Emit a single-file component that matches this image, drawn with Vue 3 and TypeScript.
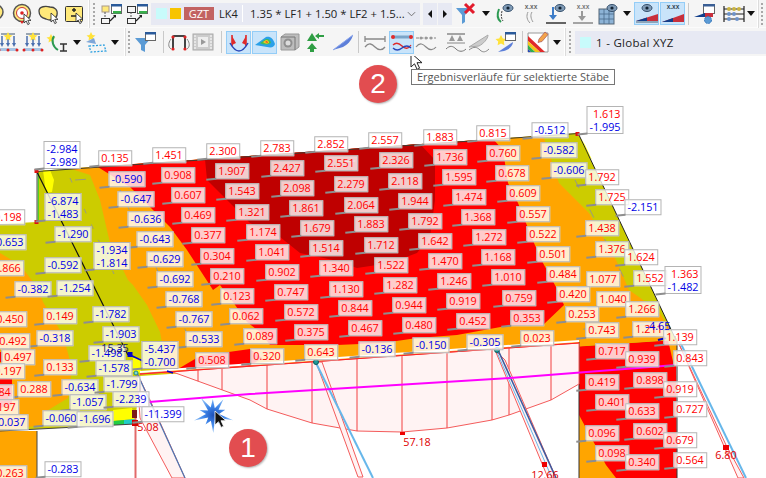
<script setup lang="ts">
type Cell = { k: 'i' | 'a' | 'c' | 's' | 'b' | 'g' | 'x'; w: number; svg?: string }

const cur = (x: number, y: number) =>
  `<path transform="translate(${x} ${y})" d="M0 0v9l2.2-2 1.6 3.6 1.6-.8L3.8 6.4H7z" fill="#fff" stroke="#222" stroke-width=".8"/>`

const mag = `<circle cx="12" cy="10" r="7" fill="#ffe97a" stroke="#555" stroke-width="1.5"/>`
const target = `<circle cx="12" cy="11" r="8.5" fill="#ffe97a" stroke="#555" stroke-width="1.5"/><circle cx="12" cy="11" r="5.5" fill="#fff" stroke="#c33"/><circle cx="12" cy="11" r="1.8" fill="#d22"/><path d="M10 19h4l-2 3z" fill="#d22"/>${cur(14, 12)}`
const cloud = `<path d="M3 9C3 4 10 4 14 5c5 0 8 3 7 8-1 5-7 6-11 4-4-1-7-3-7-8z" fill="#ffe97a" stroke="#444" stroke-width="1.3"/>${cur(15, 11)}`
const ybox = `<rect x="3.500" y="4.500" width="17" height="15" rx="1" fill="#ffe97a" stroke="#333"/><path d="M10 8h4M12 6v4M9 14h5" stroke="#222" stroke-width="1.4"/>${cur(14, 11)}`
const winTail = `<rect x="12.500" y="2.500" width="10" height="9" fill="#fff" stroke="#666"/><rect x="12" y="2" width="11" height="2.500" fill="#2a5a9a"/><rect x="14" y="9" width="8" height="2.500" fill="#36b04a"/><rect x="2.500" y="16.500" width="8" height="5" fill="none" stroke="#333"/><path d="M11 19l5-5" stroke="#222" stroke-width="1.2"/><path d="M14 13l3 0 0 3z" fill="#222"/>`
const winA = `<rect x="3" y="4" width="7" height="6" fill="#ffe97a" stroke="#a98"/><path d="M6 10v6" stroke="#555" stroke-dasharray="2 1"/>${winTail}`
const winB = `<rect x="2.500" y="4.500" width="8" height="6" fill="none" stroke="#333"/><path d="M6 10v6" stroke="#555" stroke-dasharray="2 1"/>${winTail}`
const funnelX = `<path d="M2 6h15l-6 7v7l-3 2v-9z" fill="#5b9bd5"/><path d="M11 2l9 9M20 2l-9 9" stroke="#e21b2c" stroke-width="3"/>`
const eye = (x: number, y: number) =>
  `<ellipse cx="${x}" cy="${y}" rx="5" ry="3.500" fill="#7f9ab5" stroke="#35506d"/><circle cx="${x}" cy="${y}" r="1.600" fill="#123"/>`
const arcEye = `<path d="M6 7c-2 5-2 10 2 13" fill="none" stroke="#2c9a52" stroke-width="2"/><path d="M9 9c-1 4-1 7 1 10" fill="none" stroke="#444" stroke-dasharray="2 1"/>${eye(15, 6)}`
const xxx = (c: string) => `<text x="12" y="7" font-size="6.500" font-family="Liberation Sans" font-weight="700" text-anchor="middle" fill="${c}">x.xx</text>`
const xxArc = `${xxx('#666')}<path d="M9 10c-2 4-1 8 2 11M13 10c-2 3-1 7 1 10" fill="none" stroke="#999"/>`
const eyeArrow = `${eye(16, 6)}<path d="M9 5v11" stroke="#3c7cc8" stroke-width="2"/><path d="M5 13h8l-4 5z" fill="#3c7cc8"/><path d="M2 21h20" stroke="#333" stroke-width="1.500"/>`
const xxArrow = `${xxx('#777')}<path d="M11 9v8" stroke="#999" stroke-width="2"/><path d="M7 14h8l-4 5z" fill="#999"/><path d="M2 21h20" stroke="#888" stroke-width="1.500"/>`
const gridEye = `<rect x="3" y="7" width="15" height="15" fill="#8db3d6" stroke="#567"/><path d="M8 7v15M13 7v15M3 12h15M3 17h15" stroke="#4a6a8a" stroke-width=".8"/>${eye(16, 6)}`
const wedgeEye = `${eye(12, 6)}<path d="M1 19l22-7v7z" fill="#c8303c"/><path d="M1 19l11-3.500v3.500z" fill="#123f8c"/><path d="M1 20h22" stroke="#345" stroke-width=".8"/>`
const wedgeX = `${xxx('#345')}<path d="M1 20l22-8v8z" fill="#c8303c"/><path d="M1 20l11-4v4z" fill="#123f8c"/>`
const winGear = `<rect x="10.500" y="2.500" width="11" height="9" fill="#fff" stroke="#666"/><rect x="10" y="2" width="12" height="2.500" fill="#3a5f95"/><path d="M1 15l11-4v4z" fill="#123f8c"/><path d="M12 11l8 0v4h-8z" fill="#c8303c"/><circle cx="15" cy="18" r="3.500" fill="#5b9bd5" stroke="#3a79bb" stroke-dasharray="2 1"/>`
const abacus = `<path d="M3 4v16M23 4v16M3 7h20M3 12h20M3 17h20" stroke="#222" stroke-width="1.200"/><circle cx="8" cy="7" r="2" fill="#c9b340"/><circle cx="13" cy="7" r="2" fill="#c9b340"/><circle cx="18" cy="7" r="2" fill="#c9b340"/><circle cx="8" cy="12" r="2" fill="#6d93c9"/><circle cx="13" cy="12" r="2" fill="#6d93c9"/><circle cx="8" cy="17" r="2" fill="#6d93c9"/><circle cx="16" cy="17" r="2" fill="#6d93c9"/>`

const load = `<path d="M5 4h14" stroke="#7b8b9b" stroke-width="1.500"/><path d="M6 6v9M12 6v9M18 6v9" stroke="#4a6fae" stroke-width="1.500"/><path d="M4 13h4l-2 4zM10 13h4l-2 4zM16 13h4l-2 4z" fill="#4a6fae"/><path d="M12 2l1.500 3 3 .5-2.500 2 .5 3-2.500-1.500-2.500 1.500.5-3-2.500-2 3-.5z" fill="#ffe23a"/><rect x="3" y="18" width="18" height="3" fill="#a9c5e4"/><circle cx="3" cy="20" r="1.500" fill="#d22"/><circle cx="21" cy="20" r="1.500" fill="#d22"/><circle cx="12" cy="20" r="1.500" fill="#d22"/>`
const starArc = `<path d="M5 4l1.500 3 3 .5-2.500 2 .5 3L5 11l-2.500 1.500.5-3-2.500-2 3-.5z" fill="#ffe23a"/><path d="M8 6c-3 5-1 11 4 14" fill="none" stroke="#2c9a52" stroke-width="2"/><path d="M14 14h7M17.500 14v7M14 21h7" stroke="#333" stroke-width="1.500"/>`
const starPlate = `<path d="M8 2l1.500 3 3 .5-2.500 2 .5 3L8 9l-2.500 1.500.5-3-2.500-2 3-.5z" fill="#ffe23a"/><path d="M3 12l8-4 2 6z" fill="#7fa6d8"/><path d="M6 16l15-1 2 6-15 1z" fill="none" stroke="#2a9fe0" stroke-dasharray="2 1.500" stroke-width="1.300"/>`
const funnelW = `<path d="M2 8h16l-6 7v7l-4-2v-5z" fill="#5b9bd5"/><rect x="12.500" y="2.500" width="10" height="8" fill="#fff" stroke="#666"/><rect x="12" y="2" width="11" height="2.500" fill="#2a5a9a"/>`
const frame = `<path d="M6 19V7q0-1 1-1h10q1 0 1 1v12" fill="none" stroke="#444" stroke-width="2"/><path d="M4 9c-3 4-3 8 0 10M20 9c3 4 3 8 0 10" fill="none" stroke="#888"/><circle cx="6" cy="7" r="1.600" fill="#d22"/><circle cx="18" cy="7" r="1.600" fill="#d22"/><circle cx="6" cy="19" r="1.600" fill="#d22"/><circle cx="18" cy="19" r="1.600" fill="#d22"/>`
const film = `<rect x="2" y="4" width="20" height="16" fill="#ccc" stroke="#aaa"/><rect x="7" y="7" width="10" height="10" fill="#eee"/><path d="M10 9v6l5-3z" fill="#999"/><path d="M3 6h2M3 9h2M3 12h2M3 15h2M3 18h2M19 6h2M19 9h2M19 12h2M19 15h2M19 18h2" stroke="#fff"/>`
const diagram = `<path d="M5 5v11M19 5v11" stroke="#e02a2a" stroke-width="1.600"/><path d="M5 6l4 7-4 2zM19 6l-4 7 4 2z" fill="#e02a2a"/><path d="M3 13q9 16 18 0" fill="none" stroke="#2747b8" stroke-width="1.500"/>`
const surface = `<path d="M2 15L13 7c4-1 7 1 9 7-1 3-3 4-8 3z" fill="#2aa0e8"/><path d="M7 13l6-4c3-.5 4 1 5 4-4 2-7 2-11 0z" fill="#3ebc5a"/><path d="M10 12l3-2c2 0 3 1 3 3-2 1-4 1-6-1z" fill="#f2c81e"/><path d="M12 12l2-1 1 2z" fill="#e23a2a"/>`
const box3d = `<path d="M3 7l4-3h14v13l-4 3H3z" fill="#bdbdbd" stroke="#999"/><path d="M3 7h14v13" fill="none" stroke="#777"/><circle cx="10" cy="13" r="4.500" fill="#8f8f8f"/><circle cx="10" cy="13" r="2.500" fill="#dcdcdc"/>`
const arrows = `<path d="M11 3l5 8H6z" fill="#2f9e44"/><path d="M11 13l5 6h-3v3H9v-3H6z" fill="#2f9e44"/><path d="M23 5h-5v-2l-4 3 4 3V7h5z" fill="#2f9e44"/>`
const slash = `<path d="M2 20L22 5c-1 5-6 10-10 12z" fill="#5d7fd9"/><path d="M2 20L22 5" stroke="#8aa5ec"/>`
const lines = (c: string, e: string) => `<path d="M2 9h20M2 6v6M22 6v6" stroke="${c}" stroke-width="1.300"/><path d="M2 17c4-5 7-3 10 0s7 4 10 0" fill="none" stroke="${e}" stroke-width="1.300"/>`
const linesSel = `<path d="M3 7h18" stroke="#7aa4c8" stroke-width="3"/><circle cx="3" cy="7" r="2" fill="#e02a2a"/><circle cx="21" cy="7" r="2" fill="#e02a2a"/><path d="M3 15q4-4 9 1t9-1" fill="none" stroke="#e02a2a" stroke-width="1.300"/><path d="M3 18q4 4 9 0t9 0" fill="none" stroke="#2747b8" stroke-width="1.300"/>`
const dash = `<path d="M2 8h20" stroke="#aaa" stroke-width="1.500" stroke-dasharray="3 1.500"/><circle cx="7" cy="8" r="1.500" fill="#999"/><circle cx="12" cy="8" r="1.500" fill="#999"/><circle cx="17" cy="8" r="1.500" fill="#999"/><path d="M2 17c4-5 7-3 10 0s7 4 10 0" fill="none" stroke="#888" stroke-width="1.200"/>`
const persons = `<path d="M3 4h18" stroke="#888" stroke-width="1.500"/><path d="M8 5l3 6H5zM16 5l3 6h-6z" fill="#999"/><path d="M3 13h18" stroke="#888"/><path d="M2 19c4-4 7-3 10 0s7 3 10 0" fill="none" stroke="#777"/>`
const fade = `<path d="M2 17L21 5c0 4-5 9-9 11z" fill="#ccc" stroke="#aaa"/><path d="M2 20c5-4 8-3 11 0s6 2 9-1" fill="none" stroke="#888"/>`
const starWin = `<path d="M8 5l1.800 3.500 3.700.6-2.700 2.500.6 3.700L8 13.500l-3.400 1.800.6-3.700L2.500 9.100l3.700-.6z" fill="#ffe23a"/><rect x="12.500" y="2.500" width="10" height="8" fill="#fff" stroke="#666"/><rect x="12" y="2" width="11" height="2.500" fill="#2a5a9a"/><path d="M5 22l15-10c0 4-5 8-9 9z" fill="#5d7fd9"/>`
const palette = `<path d="M2 3h20v19H2z" fill="#fff" stroke="#999"/><path d="M2 6L19 22h-5L2 11z" fill="#e02a2a"/><path d="M2 11l12 11H9L2 15z" fill="#f5c518"/><path d="M2 15l7 7H5l-3-3z" fill="#2fae4a"/><path d="M2 19l3 3H2z" fill="#2747b8"/><path d="M13 9l6-7 3 2.500-6 7-4 1z" fill="#f3a44a" stroke="#945" stroke-width=".6"/>`

const icon = (svg: string, w = 26): Cell => ({ k: 'i', w, svg })
const active = (svg: string, w = 25): Cell => ({ k: 'a', w, svg })
const caret = (w = 13): Cell => ({ k: 'c', w })
const sep = (w = 3): Cell => ({ k: 's', w })
const brk = (w = 3): Cell => ({ k: 'b', w })
const grip = (w = 8): Cell => ({ k: 'g', w })
const gap = (w: number): Cell => ({ k: 'x', w })

const leftA: Cell[] = [icon(mag), icon(target), icon(cloud), icon(ybox), brk(), grip(), icon(winA), icon(winB)]
const rightA: Cell[] = [
  icon(funnelX), caret(), icon(arcEye), icon(xxArc, 25), icon(eyeArrow), icon(xxArrow, 27), icon(gridEye, 24), caret(14),
  active(wedgeEye), gap(1), active(wedgeX), sep(7), icon(winGear), gap(2), icon(abacus), caret(10), brk(), grip(6),
]
const leftB: Cell[] = [
  icon(load), icon(load, 24), icon(starArc), caret(12), icon(starPlate, 24), caret(15), brk(4), grip(6), icon(funnelW), sep(10),
  icon(frame, 22), icon(film), sep(10), active(diagram), gap(1), active(surface), icon(box3d), icon(arrows, 20), gap(6), icon(slash, 28), sep(3),
  icon(lines('#888', '#888'), 29), active(linesSel), icon(dash, 24), gap(6), icon(persons, 24), icon(fade, 21), icon(starWin, 32), sep(2),
  icon(palette, 29), caret(10), brk(5), grip(5), gap(3),
]

type Label = [string, number, number]
const labels: Label[] = [
  ['0.135', 115, 158], ['1.451', 169, 155], ['2.300', 223, 151], ['2.783', 277, 148], ['2.852', 331, 144], ['2.557', 385, 140], ['1.883', 440, 137], ['0.815', 493, 133], ['-0.512', 550, 130],
  ['-0.590', 127, 179], ['0.908', 178, 175], ['1.907', 232, 171], ['2.427', 287, 168], ['2.551', 341, 163], ['2.326', 396, 160], ['1.736', 450, 157], ['0.760', 503, 153], ['-0.582', 559, 150],
  ['-0.647', 136, 199], ['0.607', 188, 195], ['1.543', 242, 191], ['2.098', 297, 188], ['2.279', 351, 184], ['2.118', 405, 181], ['1.595', 459, 177], ['0.678', 512, 173], ['-0.606', 569, 170], ['1.792', 602, 177],
  ['-0.636', 146, 219], ['0.469', 198, 215], ['1.321', 252, 212], ['1.861', 306, 208], ['2.064', 361, 205], ['1.944', 415, 201], ['1.474', 469, 197], ['0.609', 523, 193], ['1.725', 612, 197], ['-2.151', 643, 207],
  ['-0.643', 155, 239], ['0.377', 208, 235], ['1.174', 263, 232], ['1.679', 317, 228], ['1.883', 371, 224], ['1.792', 425, 221], ['1.368', 478, 217], ['0.557', 533, 214], ['1.438', 602, 228],
  ['-0.629', 165, 259], ['0.304', 217, 256], ['1.041', 272, 252], ['1.514', 326, 248], ['1.712', 381, 245], ['1.642', 435, 241], ['1.272', 489, 237], ['0.522', 543, 234], ['1.376', 612, 249], ['1.624', 641, 257],
  ['-0.692', 175, 279], ['0.210', 227, 276], ['0.902', 282, 272], ['1.340', 336, 268], ['1.522', 391, 265], ['1.470', 445, 261], ['1.168', 498, 257], ['0.501', 553, 254], ['1.552', 650, 278],
  ['-0.768', 184, 299], ['0.123', 237, 296], ['0.747', 291, 292], ['1.130', 346, 289], ['1.282', 400, 285], ['1.246', 454, 281], ['1.010', 508, 277], ['0.484', 563, 274], ['1.077', 603, 279],
  ['-0.767', 194, 319], ['0.062', 246, 316], ['0.572', 301, 312], ['0.844', 355, 308], ['0.944', 409, 305], ['0.919', 463, 301], ['0.759', 519, 298], ['0.420', 573, 294], ['1.040', 613, 299],
  ['-0.533', 204, 339], ['0.089', 260, 336], ['0.375', 311, 332], ['0.467', 365, 328], ['0.480', 419, 325], ['0.452', 473, 321], ['0.353', 527, 318], ['0.253', 582, 314], ['1.266', 642, 309],
  ['0.508', 212, 360], ['0.320', 267, 356], ['0.643', 321, 352], ['-0.136', 377, 349], ['-0.150', 431, 345], ['-0.305', 485, 342], ['0.023', 537, 338], ['0.743', 602, 330], ['1.211', 649, 329],
  ['0.717', 612, 351], ['0.939', 642, 359], ['0.419', 602, 382], ['0.898', 650, 380], ['0.401', 612, 402], ['0.633', 642, 411], ['0.096', 602, 433], ['0.602', 650, 431], ['0.098', 612, 453], ['0.340', 642, 462],
  ['0.843', 690, 358], ['0.919', 680, 389], ['0.727', 690, 409], ['0.679', 680, 440], ['0.564', 690, 460], ['1.139', 680, 337],
  ['0.198', 8, 217], ['-0.653', 8, 242], ['0.866', 7, 268], ['-1.290', 73, 234], ['-0.592', 63, 265], ['-0.382', 33, 289], ['-1.254', 75, 288], ['-1.782', 111, 314], ['0.149', 60, 316], ['0.450', 10, 319],
  ['-0.318', 55, 338], ['-1.903', 121, 334], ['0.492', 13, 341], ['0.497', 18, 357], ['-1.498', 107, 353], ['-1.578', 114, 368], ['0.133', 60, 367], ['0.197', 8, 371], ['0.288', 34, 389], ['-0.634', 80, 387],
  ['-1.799', 122, 384], ['-1.057', 88, 402], ['0.084', -3, 392], ['0.197', 2, 407], ['-0.060', 61, 418], ['-0.037', 10, 422], ['-1.696', 95, 419], ['-2.239', 131, 399], ['-11.399', 163, 414], ['-0.283', 63, 469], ['0.263', 10, 473],
  ['-2.984|-2.989', 62, 155], ['-6.874|-1.483', 63, 207], ['-1.934|-1.814', 112, 256], ['-5.437|-0.700', 160, 355], ['1.613|-1.995', 605, 120], ['1.363|-1.482', 683, 280],
]
const plainLabels: { t: string; x: number; y: number; c: string }[] = [
  { t: '15.35', x: 115, y: 347, c: 'dark' }, { t: '-4.65', x: 658, y: 325, c: 'blue' }, { t: '5.08', x: 148, y: 426, c: 'red' },
  { t: '57.18', x: 417, y: 441, c: 'red' }, { t: '12.66', x: 545, y: 474, c: 'red' }, { t: '6.80', x: 726, y: 454, c: 'red' },
]
const lineClass = (s: string) => (s.startsWith('-') ? 'neg' : 'pos')
const labelStyle = (x: number, y: number) => ({ left: `${x}px`, top: `${y - 56}px` })

const pts = (a: number[][]) => a.map((p) => p.join(',')).join(' ')
const olive = pts([[37, 171], [578, 133], [676, 340], [140, 376], [135, 424], [0, 431], [0, 224], [37, 222]])
const orangeL = pts([[0, 253], [20, 265], [37, 287], [43, 302], [63, 335], [72, 368], [68, 398], [45, 412], [43, 425], [0, 431]])
const orangeM = pts([[70, 168.500], [543, 135.500], [559, 183], [589, 213], [616, 260], [629, 290], [639, 297], [659, 312], [669, 328], [672, 340], [163, 374], [163, 348], [160, 332], [147, 305], [133, 285], [128, 280], [110, 243], [100, 200], [90, 175]])
const red = pts([[97, 166.500], [493, 139], [503, 150], [508, 183], [518, 203], [526, 223], [534, 243], [543, 263], [556, 287], [564, 305], [543, 325], [506, 326], [457, 335], [417, 338], [383, 343], [337, 345], [270, 345], [260, 332], [247, 322], [233, 302], [220, 285], [213, 290], [200, 270], [187, 250], [170, 227], [150, 207], [130, 187]])
const dark = pts([[205, 159], [420, 144], [435, 160], [435, 200], [430, 237], [417, 253], [390, 263], [357, 268], [333, 260], [300, 253], [280, 237], [250, 223], [227, 200], [207, 180]])
const pink = pts([[140, 374], [579, 343], [579, 384], [551, 400], [509, 415], [492, 420], [447, 428], [402, 432], [357, 431], [312, 423], [267, 409], [250, 400], [170, 371]])
const webV = [198, 222, 267, 312, 357, 402, 447, 492, 509, 551]
const webEnd = (x: number) => {
  const table: [number, number][] = [[170, 371], [250, 400], [267, 409], [312, 423], [357, 431], [402, 432], [447, 428], [492, 420], [509, 415], [551, 400], [579, 384]]
  for (let i = 1; i < table.length; i++) {
    if (x <= table[i][0]) {
      const [a, b] = table[i - 1]
      const [c, d] = table[i]
      return b + ((x - a) / (c - a)) * (d - b)
    }
  }
  return 384
}
const webTop = (x: number) => 374 - ((x - 140) * 31) / 439
const star = (() => {
  const radii = [21, 7, 15, 6, 19, 7, 13, 6, 20, 7, 14, 6, 21, 7, 15, 6, 18, 7, 13, 6]
  return radii
    .map((r, i) => {
      const a = (i / radii.length) * Math.PI * 2 + 0.3
      return `${(213 + r * Math.cos(a)).toFixed(1)},${(414 + r * Math.sin(a)).toFixed(1)}`
    })
    .join(' ')
})()
</script>

<template>
  <div class="page">
    <header class="toolbar">
      <div class="row row-a">
        <template v-for="(c, i) in leftA" :key="'la' + i">
          <div class="cell" :class="'k-' + c.k" :style="{ width: c.w + 'px' }">
            <svg v-if="c.svg" class="ic" viewBox="0 0 24 24" v-html="c.svg" />
          </div>
        </template>
        <div class="combo">
          <span class="swatch cyan"></span>
          <span class="swatch amber"></span>
          <span class="gzt">GZT</span>
          <span class="lk">LK4</span>
          <span class="combo-sep"></span>
          <span class="formula">1.35 * LF1 + 1.50 * LF2 + 1.5...</span>
          <svg class="chev" viewBox="0 0 10 6"><path d="M1 1l4 4 4-4" fill="none" stroke="#666" /></svg>
        </div>
        <button class="step" type="button"><svg viewBox="0 0 6 10"><path d="M5 1v8L1 5z" fill="#111" /></svg></button>
        <button class="step" type="button"><svg viewBox="0 0 6 10"><path d="M1 1v8l4-4z" fill="#111" /></svg></button>
        <template v-for="(c, i) in rightA" :key="'ra' + i">
          <div class="cell" :class="'k-' + c.k" :style="{ width: c.w + 'px' }">
            <svg v-if="c.svg" class="ic" viewBox="0 0 24 24" v-html="c.svg" />
          </div>
        </template>
      </div>
      <div class="row row-b">
        <template v-for="(c, i) in leftB" :key="'lb' + i">
          <div class="cell" :class="'k-' + c.k" :style="{ width: c.w + 'px' }">
            <svg v-if="c.svg" class="ic" viewBox="0 0 24 24" v-html="c.svg" />
          </div>
        </template>
        <div class="view">
          <span class="swatch cyan"></span>
          <span class="view-name">1 - Global XYZ</span>
        </div>
      </div>
    </header>

    <main class="canvas">
      <svg class="model" viewBox="0 56 766 422">
        <polygon :points="pts([[0, 431], [37, 431], [37, 478], [0, 478]])" fill="#ffa500" />
        <polygon :points="pts([[579, 340], [676, 336], [677, 478], [579, 478]])" fill="#ff0000" />
        <polygon :points="pts([[579, 415], [606, 465], [616, 478], [579, 478]])" fill="#ffa500" />
        <polygon :points="pts([[668, 340], [677, 338], [677, 366], [674, 366]])" fill="#ffa500" />
        <polygon :points="olive" fill="#cccc00" />
        <polygon :points="orangeL" fill="#ffa500" />
        <polygon :points="orangeM" fill="#ffa500" />
        <polygon :points="pts([[0, 378], [12, 378], [12, 405], [0, 408]])" fill="#ff0000" />
        <polygon :points="pts([[0, 352], [3, 352], [3, 362], [0, 362]])" fill="#ff0000" />
        <polygon :points="red" fill="#ff0000" />
        <polygon :points="pts([[178, 369], [200, 356], [250, 349], [262, 358], [250, 366]])" fill="#ff0000" />
        <polygon :points="dark" fill="#bf0000" />
        <polygon :points="pts([[43, 170], [50, 170], [54, 180], [52, 192], [46, 193]])" fill="#ffff00" />
        <polygon :points="pts([[580, 137], [585, 145], [592, 160], [588, 155]])" fill="#ffff00" />
        <polygon :points="pts([[133, 358], [140, 358], [141, 373], [133, 372]])" fill="#ffff00" />
        <polygon :points="pts([[113, 410], [132, 408], [135, 419], [113, 421]])" fill="#ffff00" />
        <polygon :points="pts([[113, 421], [124, 420], [124, 425], [113, 425]])" fill="#22cc44" />
        <polygon :points="pts([[124, 420], [135, 419], [135, 424], [124, 425]])" fill="#22ccc8" />
        <polygon :points="pts([[37, 172], [39, 172], [39, 222], [37, 222]])" fill="#55cc22" />

        <g fill="none" stroke="#9a9a80" stroke-width="1" stroke-dasharray="11 43">
          <path d="M75 180L560 147" />
          <path d="M260 353L680 322" />
          <path d="M70 178l44 96M120 190l70 150" stroke-dasharray="5 12" />
          <path d="M575 180l55 110" stroke-dasharray="9 24" />
        </g>

        <path d="M37 171.500L578 133.500" stroke="#3c3c30" stroke-width="1" />
        <path d="M37 172V222" stroke="#888" stroke-width="1.500" />
        <path d="M579 135L676 340" stroke="#222" stroke-width="1" />
        <path d="M37 172L128 355" stroke="#111" stroke-width="1.200" />
        <polygon :points="pts([[37, 431], [135, 424], [135, 478], [37, 478]])" fill="#fff" />
        <path d="M37 431V478M0 431L135 424" stroke="#444" stroke-width="1" fill="none" />
        <path d="M579 342V478M677 340V478" stroke="#333" stroke-width="1" fill="none" />

        <polygon :points="pink" fill="#fff3f3" stroke="#f45b5b" stroke-width="1" />
        <path d="M140 372L579 341" stroke="#ffffff" stroke-width="2" />
        <path d="M140 374L579 343" stroke="#f22" stroke-width="1" />
        <g stroke="#f24040" stroke-width="1">
          <line v-for="x in webV" :key="x" :x1="x" :x2="x" :y1="webTop(x)" :y2="webEnd(x)" />
        </g>
        <path d="M400 432h5v3h-5z" fill="#e00" />

        <polygon :points="pts([[316, 362], [322, 362], [363, 477], [358, 477]])" fill="#fff3f3" stroke="#f45b5b" />
        <path d="M316 363L373 478" stroke="#67b7ea" stroke-width="2" fill="none" />
        <polygon :points="pts([[495, 350], [505, 360], [556, 478], [548, 478]])" fill="#fff3f3" stroke="#f45b5b" />
        <path d="M498 350L556 478" stroke="#3e5a9e" stroke-width="1.600" fill="none" />
        <path d="M496 350L552 478" stroke="#67b7ea" stroke-width="1" fill="none" />
        <polygon :points="pts([[679, 344], [726, 445], [744, 478], [738, 478]])" fill="#fff3f3" stroke="#f45b5b" />
        <path d="M680 342L746 478" stroke="#67b7ea" stroke-width="2" fill="none" />
        <path d="M723 445h6v5h-6zM542 462h5v5h-5z" fill="#e00" />
        <polygon :points="pts([[137, 373], [150, 400], [185, 478], [172, 478], [140, 418]])" fill="#fff3f3" stroke="#f45b5b" />
        <path d="M137 373L185 478" stroke="#4a78b5" stroke-width="1.200" fill="none" />
        <path d="M135.500 418V478" stroke="#e26a6a" stroke-width="2" />
        <rect x="132" y="420" width="6" height="6" fill="#d60000" />
        <rect x="132" y="410" width="5" height="8" fill="#7a1a1a" />

        <path d="M149 402L250 394L510 378L676 365" stroke="#ff00ff" stroke-width="2" fill="none" />

        <path d="M130 355l13 6" stroke="#0000c8" stroke-width="1.500" />
        <rect x="127.500" y="352" width="5" height="5" fill="#0000c8" />
        <path d="M167 371l6 2" stroke="#0000c8" stroke-width="1.500" />
        <path d="M658 340l8-2" stroke="#0000c8" stroke-width="2" />
        <rect x="34.500" y="169" width="4" height="4" fill="#e01010" />
        <rect x="34.500" y="220" width="4" height="4" fill="#e01010" />
        <rect x="575.500" y="132" width="4" height="4" fill="#e01010" />
        <circle cx="316" cy="362" r="2.500" fill="#1f9a9a" stroke="#0c5c5c" />
        <circle cx="497" cy="350" r="2.500" fill="#1f9a9a" stroke="#0c5c5c" />
        <circle cx="136" cy="373" r="2" fill="#7fd8d0" stroke="#1f8a8a" />
        <defs>
          <radialGradient id="burst">
            <stop offset="0" stop-color="#1d4fb8" />
            <stop offset=".5" stop-color="#3f86ea" />
            <stop offset="1" stop-color="#8fc0f5" />
          </radialGradient>
        </defs>
        <polygon :points="star" fill="url(#burst)" />
        <path d="M215 411v14l3.500-3.200 2.600 5.600 2.500-1.200-2.600-5.500h5z" fill="#111" stroke="#fff" stroke-width=".8" />
      </svg>

      <div v-for="(l, i) in labels" :key="i" class="label" :class="{ double: l[0].includes('|') }" :style="labelStyle(l[1], l[2])">
        <span v-for="(part, j) in l[0].split('|')" :key="j" :class="lineClass(part)">{{ part }}</span>
      </div>
      <span v-for="p in plainLabels" :key="p.t" class="plain" :class="p.c" :style="labelStyle(p.x, p.y)">{{ p.t }}</span>

      <div class="badge one">1</div>
      <div class="badge two">2</div>
      <svg class="pointer" viewBox="0 0 14 20"><path d="M1 1v14l3.500-3.200 2.600 5.600 2.500-1.200-2.600-5.500h5z" fill="#fff" stroke="#222" /></svg>
      <div class="tip">Ergebnisverläufe für selektierte Stäbe</div>
    </main>
  </div>
</template>

<style scoped>
.page {
  width: 766px;
  height: 478px;
  display: flex;
  flex-direction: column;
  overflow: hidden;
  background: #fff;
  font-family: "Open Sans", "Noto Sans", sans-serif;
}
.toolbar {
  flex: none;
  background: #f5f5f5;
  height: 56px;
  display: flex;
  flex-direction: column;
}
.row {
  height: 28px;
  display: flex;
  align-items: center;
}
.row-a {
  margin-left: -17px;
  border-bottom: 1px solid #fbfbfb;
  height: 27px;
}
.row-b {
  margin-left: -5px;
}
.cell {
  flex: none;
  height: 24px;
  display: flex;
  align-items: center;
  justify-content: center;
}
.ic {
  width: 24px;
  height: 24px;
  flex: none;
  overflow: visible;
}
.k-a {
  height: 23px;
  background: #c9e4fa;
  border: 1px solid #94cdf7;
  box-sizing: border-box;
}
.k-c::after {
  content: "";
  border: 4px solid transparent;
  border-top: 5px solid #111;
  border-bottom: 0;
}
.k-s::after {
  content: "";
  width: 1px;
  height: 22px;
  background: #c9c9c9;
}
.k-b {
  height: 28px;
}
.k-b::after {
  content: "";
  width: 1px;
  height: 100%;
  background: #fff;
  box-shadow: 1px 0 0 #dcdcdc;
}
.k-g::after {
  content: "";
  width: 2px;
  height: 22px;
  background: repeating-linear-gradient(#a9a9a9 0 2px, transparent 2px 4px);
}
.combo {
  flex: none;
  width: 269px;
  margin-left: 1px;
  height: 22px;
  background: #e7e9f3;
  display: flex;
  align-items: center;
  font-size: 12px;
  color: #222;
}
.swatch {
  flex: none;
  width: 11px;
  height: 11px;
}
.cyan {
  background: #c8fbfb;
}
.amber {
  background: #f7c400;
}
.combo .cyan {
  margin-left: 5px;
}
.combo .amber {
  margin-left: 3px;
}
.gzt {
  margin-left: 3px;
  width: 30px;
  height: 13px;
  line-height: 13px;
  text-align: center;
  background: #c26262;
  color: #fff;
  font-size: 11px;
}
.lk {
  margin-left: 5px;
  font-size: 11px;
  width: 21px;
}
.combo-sep {
  width: 1px;
  height: 17px;
  background: #fff;
  margin: 0 7px 0 2px;
}
.formula {
  flex: 1;
  font-size: 11.3px;
  white-space: nowrap;
  overflow: hidden;
}
.chev {
  flex: none;
  width: 9px;
  height: 6px;
  margin-right: 4px;
}
.step {
  flex: none;
  width: 14px;
  height: 22px;
  margin-left: 1px;
  padding: 0;
  border: 0;
  background: #e7e9f3;
  display: flex;
  align-items: center;
  justify-content: center;
}
.combo + .step {
  margin-left: 3px;
}
.step svg {
  width: 6px;
  height: 10px;
}
.step + .step + .cell {
  margin-left: 1px;
}
.view {
  flex: 1;
  height: 23px;
  background: #e7e9f3;
  display: flex;
  align-items: center;
  gap: 5px;
  padding-left: 5px;
}
.view .swatch {
  width: 11px;
  height: 11px;
}
.view-name {
  font-size: 11.500px;
  color: #222;
  letter-spacing: 0.3px;
}
.canvas {
  position: relative;
  flex: 1;
  overflow: hidden;
  background: #fff;
}
.model {
  position: absolute;
  inset: 0;
  width: 766px;
  height: 422px;
}
.label {
  position: absolute;
  transform: translate(-50%, -50%);
  background: rgba(255, 255, 255, 0.8);
  border: 1.5px solid #b4b4b4;
  padding: 0 2px;
  height: 13.500px;
  font-size: 10.8px;
  line-height: 13.500px;
  white-space: nowrap;
  display: flex;
  flex-direction: column;
  align-items: flex-end;
}
.label.double {
  height: 26px;
  line-height: 13px;
}
.label::before {
  content: "";
  position: absolute;
  left: -10px;
  bottom: -1.500px;
  width: 10px;
  height: 1.500px;
  background: #8e8e8e;
  transform: rotate(-6deg);
}
.pos {
  color: #f00;
}
.neg {
  color: #0000e6;
}
.plain {
  position: absolute;
  transform: translate(-50%, -50%);
  font-size: 10.8px;
  white-space: nowrap;
}
.plain.red {
  color: #e00000;
}
.plain.blue {
  color: #0000e6;
  font-size: 11px;
}
.plain.dark {
  color: #1a1a66;
}
.badge {
  position: absolute;
  width: 38px;
  height: 38px;
  border-radius: 50%;
  background: #e24d50;
  color: #fff;
  font-family: "Liberation Sans", sans-serif;
  font-size: 28px;
  line-height: 38px;
  text-align: center;
  box-shadow: 1px 1px 2px rgba(0, 0, 0, 0.3);
}
.one {
  left: 229px;
  top: 373px;
}
.two {
  left: 359px;
  top: 9px;
}
.pointer {
  position: absolute;
  left: 410px;
  top: -4px;
  width: 14px;
  height: 20px;
}
.tip {
  position: absolute;
  left: 411px;
  top: 13px;
  height: 16px;
  box-sizing: border-box;
  padding: 0 5px;
  border: 1px solid #767676;
  background: #fff;
  color: #555;
  font-size: 11px;
  line-height: 14px;
  white-space: nowrap;
}
</style>

<style>
html,
body {
  margin: 0;
  background: #fff;
}
</style>
